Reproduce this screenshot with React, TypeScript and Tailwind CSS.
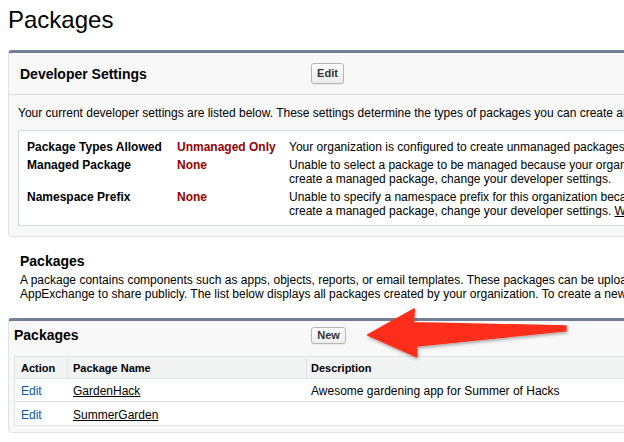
import React from 'react';

const FONT = "font-['Liberation_Sans',Arial,Helvetica,sans-serif]";

const SETTINGS = [
  {
    label: 'Package Types Allowed',
    value: 'Unmanaged Only',
    lines: ['Your organization is configured to create unmanaged packages only.'],
  },
  {
    label: 'Managed Package',
    value: 'None',
    lines: [
      'Unable to select a package to be managed because your organization does not have a namespace prefix. To',
      'create a managed package, change your developer settings.',
    ],
  },
  {
    label: 'Namespace Prefix',
    value: 'None',
    lines: [
      'Unable to specify a namespace prefix for this organization because it has no managed packages. To',
      'create a managed package, change your developer settings. ',
    ],
    link: 'What is a namespace prefix?',
  },
];

const PACKAGES = [
  { name: 'GardenHack', description: 'Awesome gardening app for Summer of Hacks' },
  { name: 'SummerGarden', description: '' },
];

const Button: React.FC<{ label: string; tall?: boolean }> = ({ label, tall }) => (
  <button
    className={`${tall ? 'h-[21px] w-[33px]' : 'h-[17px] w-[35px]'} rounded-[3px] border border-[#b5b5b5] bg-linear-to-b from-white to-[#ececec] text-[11px] font-bold leading-none text-[#333] shadow-[0_1px_0_rgba(0,0,0,0.06)]`}
  >
    {label}
  </button>
);

const App: React.FC = () => {
  return (
    <div className={`relative w-[624px] h-[442px] overflow-hidden bg-white text-black ${FONT}`}>
      <div className="w-[780px] pl-2 pt-2">
        <h1 className="text-[24px] leading-[24px] font-normal">Packages</h1>

        {/* Developer Settings panel */}
        <section className="mt-[18px] rounded-[4px] border border-[#e0e3e5] border-t-[3px] border-t-[#737e96] bg-[#f8f8f8]">
          <div className="flex h-[42px] items-center border-b border-[#dbdbdb] pl-[11px]">
            <h2 className="w-[291px] pt-[2px] text-[14px] font-bold">Developer Settings</h2>
            <Button label="Edit" tall />
          </div>
          <div className="px-[9px] pt-[11px] pb-[10px]">
            <p className="whitespace-nowrap text-[12px] leading-[14px]">
              Your current developer settings are listed below. These settings determine the types of packages you can create and the options available to you.
            </p>
            <div className="mt-[10px] flex flex-col gap-[4px] border border-[#d4dadc] bg-white px-[8px] pt-[9px] pb-[7px]">
              {SETTINGS.map((s) => (
                <div key={s.label} className="grid grid-cols-[150px_112px_1fr] text-[12px] leading-[14px]">
                  <span className="font-bold">{s.label}</span>
                  <span className="font-bold text-[#990000]">{s.value}</span>
                  <div className="whitespace-nowrap">
                    {s.lines.map((l, i) => (
                      <div key={i}>
                        {l}
                        {s.link && i === s.lines.length - 1 && <a className="underline">{s.link}</a>}
                      </div>
                    ))}
                  </div>
                </div>
              ))}
            </div>
          </div>
        </section>

        {/* Packages intro */}
        <div className="mt-[16px] pl-[12px]">
          <h3 className="text-[14px] font-bold leading-[16px]">Packages</h3>
          <p className="mt-[4px] whitespace-nowrap text-[12px] leading-[14px]">
            A package contains components such as apps, objects, reports, or email templates. These packages can be uploaded to share with others
            <br />
            AppExchange to share publicly. The list below displays all packages created by your organization. To create a new package, click New.
          </p>
        </div>

        {/* Packages list panel */}
        <section className="mt-[17px] rounded-[4px] border border-[#e0e3e5] border-t-[3px] border-t-[#737e96] bg-[#f8f8f8] px-[5px] pb-[6px]">
          <div className="flex h-[28px] items-center">
            <h2 className="w-[297px] pt-[1px] text-[14px] font-bold">Packages</h2>
            <Button label="New" />
          </div>
          <div className="mt-[7px] border border-[#e0e3e5] bg-white text-[12px]">
            <div className="grid h-[22px] grid-cols-[53px_239px_1fr] border-b border-[#e0e3e5] bg-[#f2f3f3] pt-[2px] text-[11px] font-bold">
              <div className="flex items-center border-r border-[#e0e3e5] pl-[6px]">Action</div>
              <div className="flex items-center border-r border-[#e0e3e5] pl-[5px]">Package Name</div>
              <div className="flex items-center pl-[4px]">Description</div>
            </div>
            {PACKAGES.map((p, i) => (
              <div
                key={p.name}
                className={`grid h-[23px] grid-cols-[53px_239px_1fr] pt-[2px] ${i < PACKAGES.length - 1 ? 'border-b border-[#e0e3e5]' : ''}`}
              >
                <a className="flex items-center pl-[6px] text-[#015ba7]">Edit</a>
                <div className="flex items-center pl-[5px]">
                  <a className="underline">{p.name}</a>
                </div>
                <div className="flex items-center pl-[4px]">{p.description}</div>
              </div>
            ))}
          </div>
        </section>
      </div>

      {/* Annotation arrow */}
      <svg
        className="pointer-events-none absolute left-0 top-0"
        width="624"
        height="442"
        viewBox="0 0 624 442"
      >
        <defs>
          <filter id="arrowShadow" x="-10%" y="-30%" width="120%" height="160%">
            <feDropShadow dx="1" dy="2" stdDeviation="1.5" floodColor="#000" floodOpacity="0.3" />
          </filter>
        </defs>
        <polygon
          points="367.7,335 414.3,309 413.3,322.7 566,326 566,330.7 416.7,346 416.7,356.7"
          fill="#ff2f1a"
          stroke="#ff2f1a"
          strokeWidth="1.5"
          strokeLinejoin="round"
          filter="url(#arrowShadow)"
        />
      </svg>
    </div>
  );
};

export default App;
